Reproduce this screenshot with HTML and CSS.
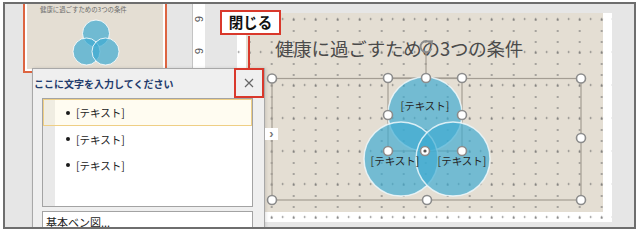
FILE: index.html
```html
<!DOCTYPE html>
<html lang="ja">
<head>
<meta charset="utf-8">
<link rel="stylesheet" href="styles.css">
</head>
<body>
<div class="frame">
  <div class="thumbs">
    <div class="thumb">
      <svg class="thumb-art" width="136" height="71" viewBox="0 0 136 71">
        <rect width="136" height="71" fill="#e4ded3"/>
        <text x="13" y="13.5" class="thumb-title">健康に過ごすための3つの条件</text>
        <g class="mini-venn">
          <circle cx="69" cy="35.5" r="13.5"/>
          <circle cx="59.5" cy="53.5" r="13.5"/>
          <circle cx="78.5" cy="53.5" r="13.5"/>
        </g>
      </svg>
    </div>
  </div>
  <div class="ruler"><span class="rnum">6</span><span class="rnum">6</span></div>
  <div class="editor">
    <div class="slide">
      <div class="slide-bg">
        <div class="slide-title">健康に過ごすための3つの条件</div>
      </div>
      <div class="dots"></div>
      <svg class="art" width="375" height="209" viewBox="0 0 375 209">
        <rect x="35" y="65.5" width="309" height="121.5" class="sel"/>
        <rect x="151" y="65" width="74" height="73" class="sel"/>
        <line x1="189" y1="39" x2="189" y2="65" class="sel"/>
        <g class="venn">
          <circle cx="188" cy="101" r="37"/>
          <circle cx="164" cy="146" r="37"/>
          <circle cx="216" cy="146" r="37"/>
        </g>
        <text x="188" y="97" class="lbl">[テキスト]</text>
        <text x="158" y="152" class="lbl">[テキスト]</text>
        <text x="225" y="152" class="lbl">[テキスト]</text>
        <g class="handle">
          <circle cx="35" cy="65.5" r="4.5"/>
          <circle cx="151" cy="65" r="4.5"/>
          <circle cx="189" cy="65" r="4.5"/>
          <circle cx="225" cy="65" r="4.5"/>
          <circle cx="344" cy="65.5" r="4.5"/>
          <circle cx="344" cy="125" r="4.5"/>
          <circle cx="344" cy="187" r="4.5"/>
          <circle cx="190" cy="187" r="4.5"/>
          <circle cx="35" cy="187" r="4.5"/>
          <circle cx="151" cy="102" r="4.5"/>
          <circle cx="225" cy="102" r="4.5"/>
          <circle cx="151" cy="138" r="4.5"/>
          <circle cx="188" cy="138" r="4.5"/>
          <circle cx="225" cy="138" r="4.5"/>
        </g>
        <circle cx="188" cy="138" r="1.6" fill="#555"/>
        <g class="rot">
          <path d="M193.6 30.2 A5.6 5.6 0 1 0 194.4 35.5" fill="none" stroke="#8a8a8a" stroke-width="2"/>
          <polygon points="191.2,27.6 196.2,27.2 195.2,32.4" fill="#8a8a8a"/>
        </g>
      </svg>
    </div>
  </div>

  <div class="pane">
    <div class="pane-head">
      <span class="pane-title">ここに文字を入力してください</span>
      <span class="close">
        <svg width="10" height="10" viewBox="0 0 10 10"><path d="M1 1 L9 9 M9 1 L1 9" stroke="#666" stroke-width="1.2"/></svg>
      </span>
    </div>
    <div class="list">
      <div class="row row-active"><span class="bullet"></span>[テキスト]</div>
      <div class="row"><span class="bullet"></span>[テキスト]</div>
      <div class="row"><span class="bullet"></span>[テキスト]</div>
    </div>
    <div class="desc">基本ベン図...</div>
  </div>

  <div class="callout">閉じる</div>
  <div class="expander">›</div>
</div>
</body>
</html>
```

FILE: styles.css
```css
html, body {
  margin: 0;
  background: #ffffff;
  font-family: "Noto Sans CJK JP", "Noto Sans", sans-serif;
}

.frame {
  position: relative;
  margin: 2px 0 0 3px;
  width: 633px;
  height: 227px;
  box-sizing: border-box;
  border: 2px solid #6e6e6e;
  background: #e6e6e6;
  display: flex;
  overflow: hidden;
}

/* thumbnails column */
.thumbs {
  flex: none;
  width: 188px;
  box-sizing: border-box;
  padding-left: 18px;
  border-right: 1px solid #c4c4c4;
}

.thumb {
  margin-top: -10px;
  width: 144px;
  height: 79px;
  box-sizing: border-box;
  border: 2px solid #dd6541;
  padding: 2px;
  background: #ffffff;
}

.thumb-art {
  display: block;
}

.thumb-title {
  font-family: "Noto Sans CJK JP", sans-serif;
  font-size: 6.4px;
  fill: #6a6a6a;
}

.mini-venn circle {
  fill: #3eabd2;
  fill-opacity: 0.7;
  stroke: #ffffff;
  stroke-width: 1;
  stroke-opacity: 0.85;
}

/* vertical ruler */
.ruler {
  flex: none;
  width: 12px;
  background: #ffffff;
  display: flex;
  flex-direction: column;
  align-items: center;
  padding-top: 9px;
  gap: 20px;
}

.rnum {
  display: block;
  height: 12px;
  line-height: 12px;
  font-family: "Liberation Sans", sans-serif;
  font-size: 11px;
  color: #555555;
  transform: rotate(90deg);
}

/* slide editor */
.editor {
  flex: 1;
  padding: 6px 0 0 32px;
}

.slide {
  position: relative;
  width: 375px;
  height: 209px;
  background: #ffffff;
}

.slide-bg {
  margin: 3px 9px 0 9px;
  height: 199px;
  background: #e4ded3;
  padding: 24px 0 0 29px;
  box-sizing: border-box;
}

.slide-title {
  font-size: 18.5px;
  line-height: 22px;
  color: #4a4a4a;
  white-space: nowrap;
  letter-spacing: -0.2px;
}

.dots {
  position: absolute;
  inset: 0;
  background-image:
    radial-gradient(circle, #686868 0.7px, transparent 1.1px),
    radial-gradient(circle, #686868 0.7px, transparent 1.1px);
  background-size: 22px 11px, 11px 33px;
  background-position: 1.7px 1.5px, 7.2px 22.5px;
}

.art {
  position: absolute;
  left: 0;
  top: 0;
}

.sel {
  fill: none;
  stroke: #a49d93;
  stroke-width: 1.2;
}

.venn circle {
  fill: #3eabd2;
  fill-opacity: 0.68;
  stroke: #eef8fb;
  stroke-width: 1.5;
  stroke-opacity: 0.85;
}

.lbl {
  font-family: "Noto Sans CJK JP", sans-serif;
  font-size: 10.5px;
  fill: #262626;
  text-anchor: middle;
}

.handle circle {
  fill: #ffffff;
  stroke: #8c8c8c;
  stroke-width: 1.6;
}

/* text pane */
.pane {
  position: absolute;
  left: 27px;
  top: 64px;
  width: 233px;
  height: 170px;
  box-sizing: border-box;
  background: #efefef;
  border: 1px solid #a8a8a8;
  box-shadow: 1px 0 3px rgba(0, 0, 0, 0.12);
}

.pane-head {
  height: 29px;
  display: flex;
  align-items: center;
  justify-content: space-between;
}

.pane-title {
  font-size: 10px;
  font-weight: 700;
  color: #1f3b6c;
  padding-left: 1px;
  white-space: nowrap;
}

.close {
  width: 30px;
  height: 30px;
  margin-top: -1px;
  box-sizing: border-box;
  border: 2.5px solid #d9382b;
  display: flex;
  align-items: center;
  justify-content: center;
}

.close svg {
  display: block;
}

.list {
  margin-left: 9px;
  width: 211px;
  height: 109px;
  box-sizing: border-box;
  border: 1px solid #a3a3a3;
  background: linear-gradient(to right, #e9e9e9 12px, #ffffff 12px);
}

.row {
  height: 26px;
  display: flex;
  align-items: center;
  padding-left: 23px;
  font-size: 10.5px;
  color: #222222;
  box-sizing: border-box;
}

.row-active {
  height: 27px;
  border: 1px solid #efcf85;
  padding-left: 22px;
  background: rgba(255, 246, 214, 0.35);
}

.bullet {
  width: 4px;
  height: 4px;
  border-radius: 50%;
  background: #1a1a1a;
  margin-right: 6px;
}

.desc {
  margin: 4px 0 0 9px;
  width: 211px;
  height: 30px;
  box-sizing: border-box;
  border: 1px solid #a3a3a3;
  background: #ffffff;
  padding: 1px 0 0 3px;
  font-size: 11px;
  line-height: 18px;
  color: #222222;
}

/* annotation */
.callout {
  position: absolute;
  left: 215px;
  top: 6px;
  width: 61px;
  height: 25px;
  box-sizing: border-box;
  border: 2.5px solid #d9382b;
  background: #ffffff;
  font-size: 14.5px;
  font-weight: 700;
  line-height: 20px;
  text-align: center;
  color: #111111;
}

.callout::after {
  content: "";
  position: absolute;
  left: 25.5px;
  top: calc(100% + 2.5px);
  width: 2.5px;
  height: 33px;
  background: #d9382b;
}

.expander {
  position: absolute;
  left: 260px;
  top: 124px;
  width: 13px;
  height: 12px;
  background: #ffffff;
  color: #777777;
  font-family: "Liberation Sans", sans-serif;
  font-size: 13px;
  font-weight: 700;
  line-height: 11px;
  text-align: center;
}
```
